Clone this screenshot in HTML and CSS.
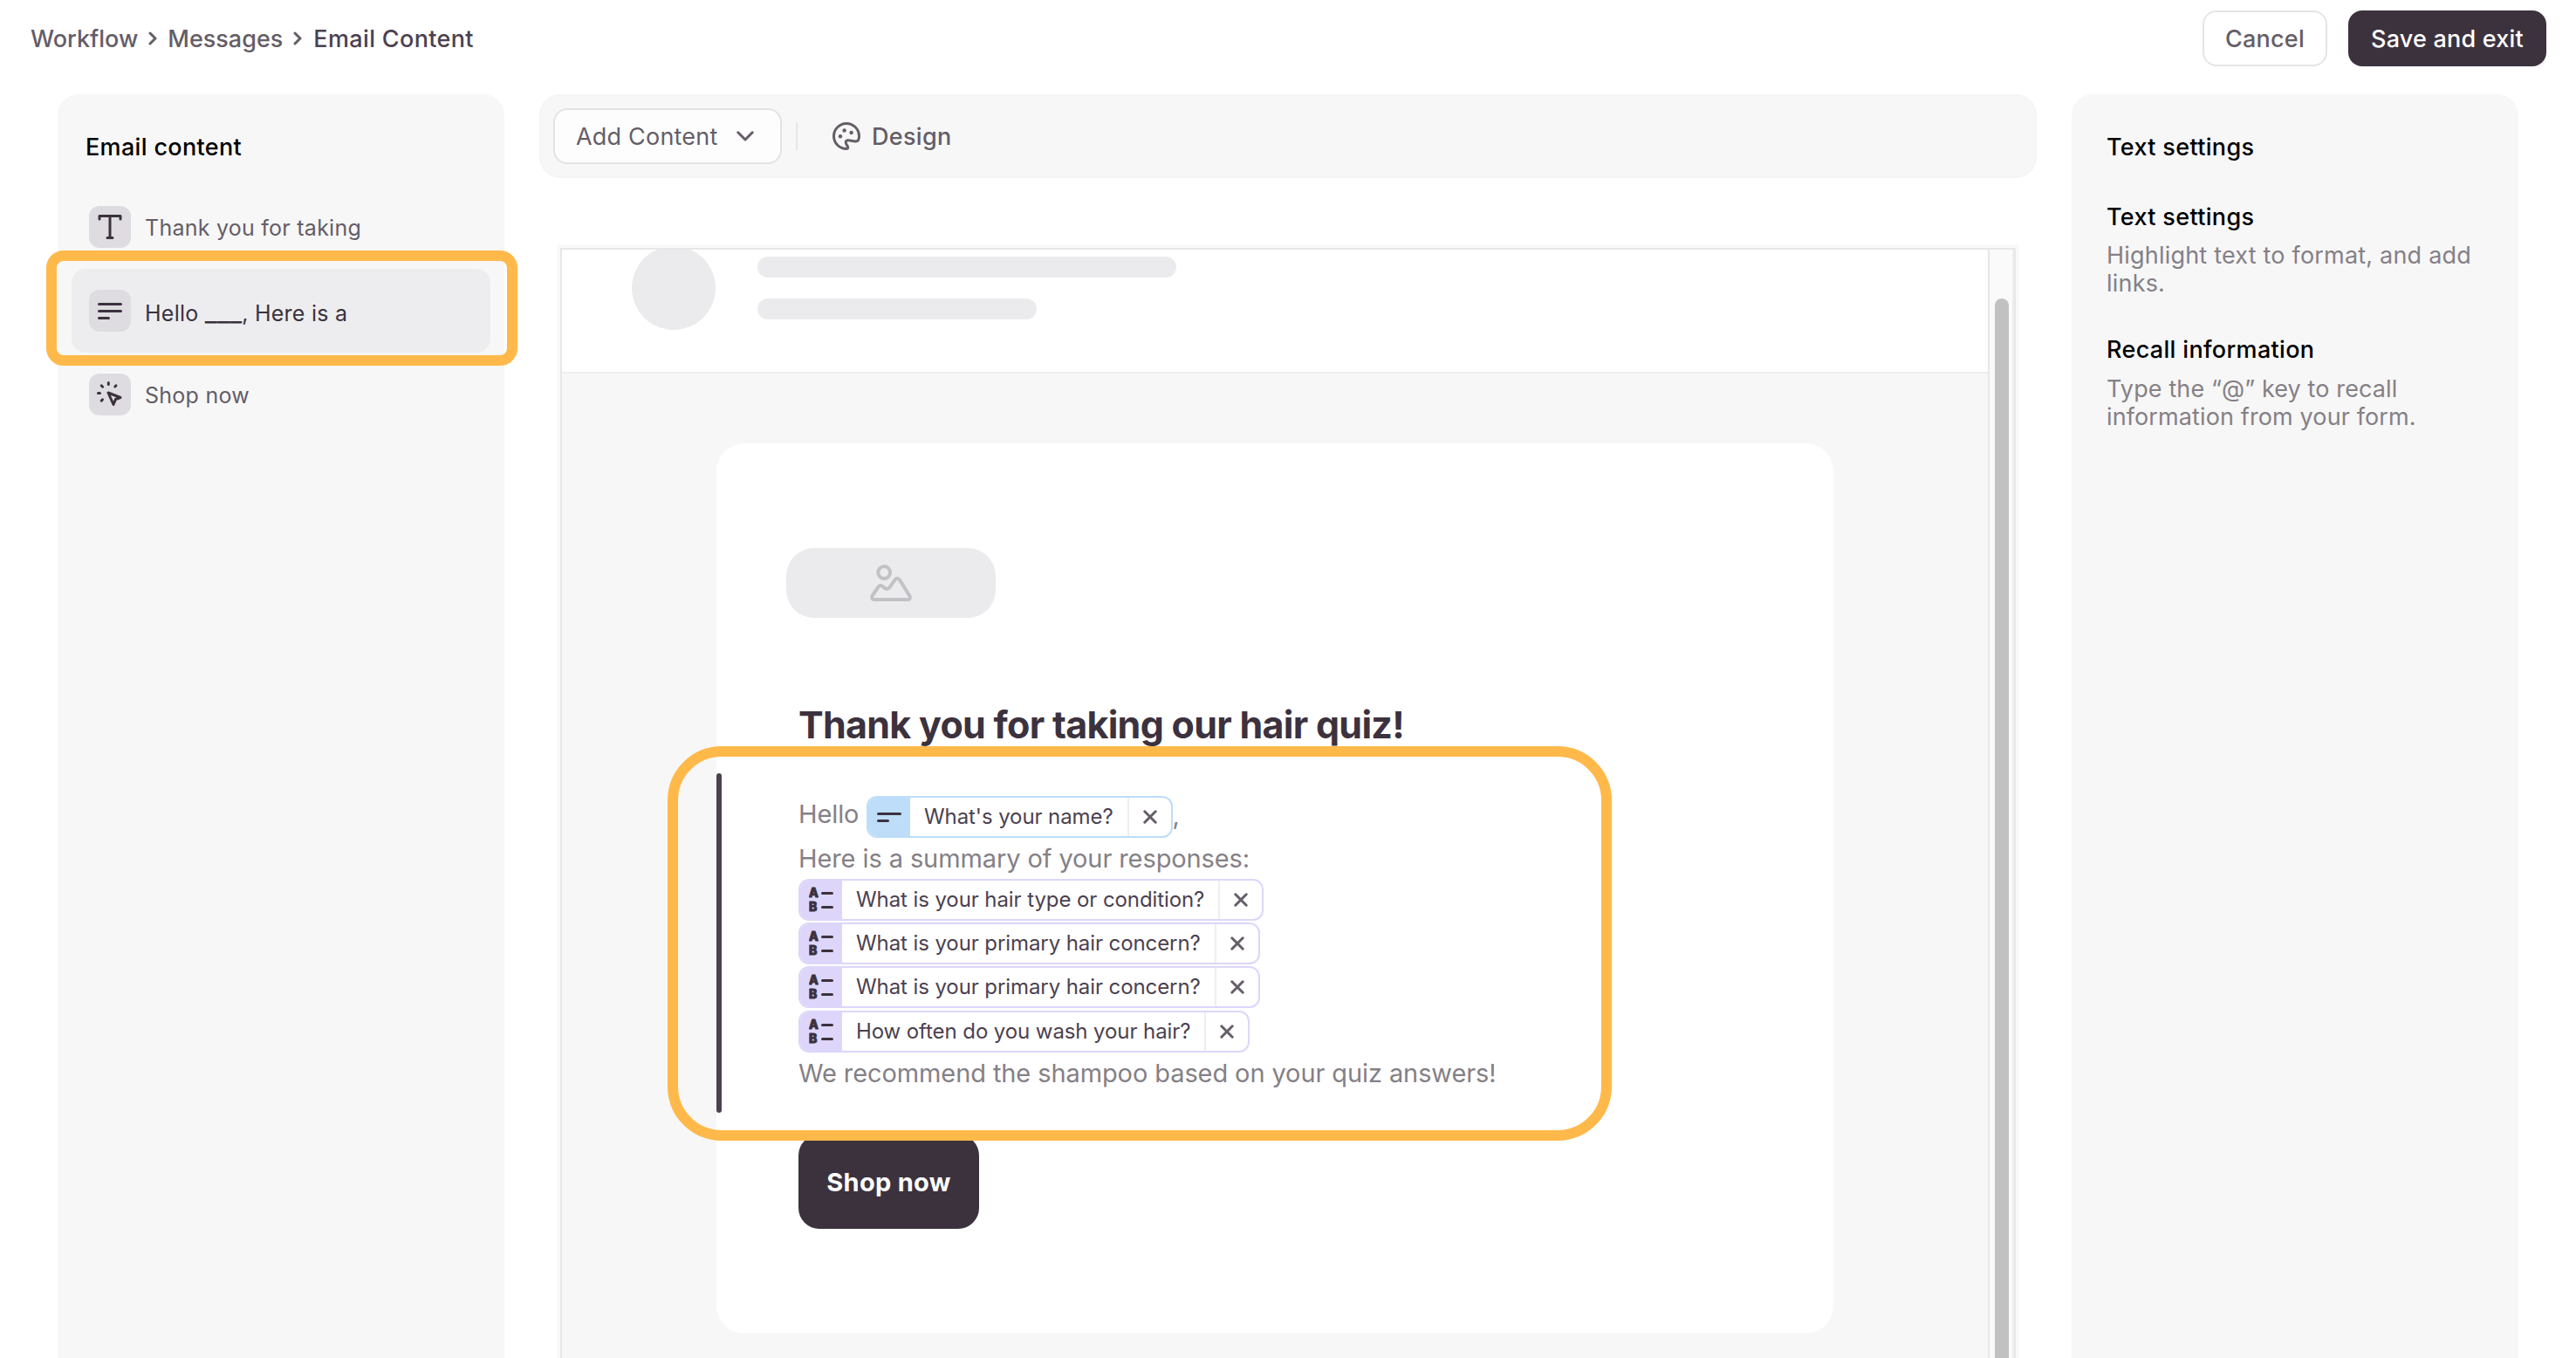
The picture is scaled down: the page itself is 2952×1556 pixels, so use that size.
FILE: index.html
```html
<!DOCTYPE html>
<html lang="en">
<head>
    <meta charset="UTF-8">
    <meta name="viewport" content="width=device-width, initial-scale=1.0">
    <title>Email Content</title>
    <link rel="stylesheet" href="styles.css">
</head>
<body>
<svg class="sprite" aria-hidden="true">
    <symbol id="icon-close" viewBox="0 0 16 16">
        <path d="M1.8 1.8 14.2 14.2M14.2 1.8 1.8 14.2"/>
    </symbol>
    <symbol id="icon-choice" viewBox="0 0 30 30">
        <text x="0" y="12.2">A</text>
        <text x="0" y="28.2">B</text>
        <path d="M15.5 7.5H26.5M15.5 23.5H26.5"/>
    </symbol>
</svg>

<header class="topbar">
    <nav class="breadcrumbs">
        <a class="crumb">Workflow</a>
        <svg class="crumb-arrow" viewBox="0 0 10 16"><path d="M2 2 8 8 2 14"/></svg>
        <a class="crumb">Messages</a>
        <svg class="crumb-arrow" viewBox="0 0 10 16"><path d="M2 2 8 8 2 14"/></svg>
        <span class="crumb current">Email Content</span>
    </nav>
    <div class="actions">
        <button class="btn btn-cancel">Cancel</button>
        <button class="btn btn-save">Save and exit</button>
    </div>
</header>

<main class="editor">
    <aside class="panel outline">
        <h2>Email content</h2>
        <ul>
            <li>
                <span class="item-icon">
                    <svg viewBox="0 0 48 48"><path d="M12 15V11.5H36V15M24 11.5V36.5M21 36.5H27"/></svg>
                </span>
                <span class="item-title">Thank you for taking</span>
            </li>
            <li class="selected">
                <span class="item-icon">
                    <svg viewBox="0 0 48 48"><path d="M11.5 16.5H36.5M11.5 24.5H36.5M11.5 32.5H22.5"/></svg>
                </span>
                <span class="item-title">Hello <span class="blank">___</span>, Here is a</span>
                <span class="highlight"></span>
            </li>
            <li>
                <span class="item-icon">
                    <svg viewBox="0 0 48 48"><path d="M22 22 36 27.5 30.5 29.5 28 35.5ZM22.3 10.5V12.5M14.2 13.8 15.6 15.2M31 13.8 29.8 15M10.5 22.5H12.5M15.5 29.8 14.2 31.2"/></svg>
                </span>
                <span class="item-title">Shop now</span>
            </li>
        </ul>
    </aside>

    <section class="workspace">
        <div class="toolbar">
            <button class="btn btn-add">
                <span>Add Content</span>
                <svg viewBox="0 0 20 12"><path d="M1.8 1.8 10 10 18.2 1.8"/></svg>
            </button>
            <span class="divider"></span>
            <button class="btn-design">
                <svg viewBox="0 0 32 32">
                    <path d="M16 1.5C8 1.5 1.5 8 1.5 16S8 30.5 16 30.5C18 30.5 18 29.3 17.4 28 16.5 26 15.2 24.8 15.2 23 15.2 21 16.8 20.6 18.6 20.8 21 21 23.5 22 26.5 22 29.5 22 30.5 19.5 30.5 16 30.5 8 24 1.5 16 1.5Z"/>
                    <circle cx="9" cy="16.3" r="2.2"/>
                    <circle cx="13.6" cy="9.5" r="2.2"/>
                    <circle cx="21.6" cy="12" r="2.2"/>
                </svg>
                <span>Design</span>
            </button>
        </div>

        <div class="preview">
            <div class="page">
                <div class="sender">
                    <span class="avatar"></span>
                    <div class="lines">
                        <span class="line"></span>
                        <span class="line short"></span>
                    </div>
                </div>
                <div class="card">
                    <div class="logo-placeholder">
                        <svg viewBox="0 0 48 42">
                            <circle cx="16.2" cy="9" r="6.9"/>
                            <path d="M4 40H44Q46.7 39.2 45.4 35.8L34 17.5Q31.3 14 28.6 17.3L22.5 26Q19.5 29.5 16.5 26.5 12 22 9.5 25.5L3 35Q1 38.5 4 40Z"/>
                        </svg>
                    </div>
                    <h1>Thank you for taking our hair quiz!</h1>
                    <div class="message">
                        <div class="row row-hello">
                            <span class="hello">Hello</span>
                            <span class="tag tag-text">
                                <span class="tag-icon"><svg viewBox="0 0 30 30"><path d="M1.5 11.4H26.5M1.5 19.4H12.5"/></svg></span>
                                <span class="tag-label">What's your name?</span>
                                <span class="tag-close"><svg><use href="#icon-close"/></svg></span>
                            </span>
                            <span class="comma">,</span>
                        </div>
                        <div class="row row-summary"><span>Here is a summary of your responses:</span></div>
                        <div class="row">
                            <span class="tag">
                                <span class="tag-icon"><svg><use href="#icon-choice"/></svg></span>
                                <span class="tag-label">What is your hair type or condition?</span>
                                <span class="tag-close"><svg><use href="#icon-close"/></svg></span>
                            </span>
                        </div>
                        <div class="row">
                            <span class="tag">
                                <span class="tag-icon"><svg><use href="#icon-choice"/></svg></span>
                                <span class="tag-label">What is your primary hair concern?</span>
                                <span class="tag-close"><svg><use href="#icon-close"/></svg></span>
                            </span>
                        </div>
                        <div class="row">
                            <span class="tag">
                                <span class="tag-icon"><svg><use href="#icon-choice"/></svg></span>
                                <span class="tag-label">What is your primary hair concern?</span>
                                <span class="tag-close"><svg><use href="#icon-close"/></svg></span>
                            </span>
                        </div>
                        <div class="row">
                            <span class="tag">
                                <span class="tag-icon"><svg><use href="#icon-choice"/></svg></span>
                                <span class="tag-label">How often do you wash your hair?</span>
                                <span class="tag-close"><svg><use href="#icon-close"/></svg></span>
                            </span>
                        </div>
                        <div class="row row-recommend"><span>We recommend the shampoo based on your quiz answers!</span></div>
                        <span class="highlight"></span>
                    </div>
                    <button class="btn-shop">Shop now</button>
                </div>
            </div>
            <div class="scrollbar"><div class="thumb"></div></div>
        </div>
    </section>

    <aside class="panel settings">
        <h2>Text settings</h2>
        <h3>Text settings</h3>
        <p>Highlight text to format, and add<br>links.</p>
        <h3>Recall information</h3>
        <p>Type the “@” key to recall<br>information from your form.</p>
    </aside>
</main>
</body>
</html>
```

FILE: styles.css
```css
:root {
    --ink: #3c323e;
    --ink-soft: #655d67;
    --muted: #858086;
    --panel: #f7f7f7;
    --placeholder: #ebebed;
    --highlight: #ffb94a;
}

* {
    box-sizing: border-box;
}

body {
    margin: 0;
    height: 1556px;
    overflow: hidden;
    background: #fff;
    color: var(--ink);
    font-family: Inter, "Liberation Sans", sans-serif;
    font-size: 27px;
    line-height: 32px;
}

h1, h2, h3, p, ul {
    margin: 0;
    padding: 0;
}

button {
    font: inherit;
    letter-spacing: inherit;
    border: none;
    background: none;
    padding: 0;
    white-space: nowrap;
}

svg {
    display: block;
    fill: none;
    stroke: currentColor;
    stroke-width: 3;
    stroke-linecap: round;
    stroke-linejoin: round;
}

.sprite {
    display: none;
}

/* Top bar */
.topbar {
    display: flex;
    justify-content: space-between;
    align-items: center;
    height: 88px;
    padding: 0 34px 0 35px;
    font-weight: 500;
}

.breadcrumbs {
    display: flex;
    align-items: center;
    gap: 12px;
    color: var(--ink-soft);
}

.crumb {
    padding-top: 1px;
}

.breadcrumbs .current {
    padding-left: 1px;
    color: #4c414f;
    letter-spacing: 0.35px;
}

.crumb-arrow {
    width: 10px;
    height: 16px;
}

.actions {
    display: flex;
    gap: 24px;
}

.btn {
    height: 64px;
    padding-top: 1px;
    border-radius: 16px;
    letter-spacing: 0.2px;
}

.btn-cancel {
    width: 143px;
    border: 2px solid #e5e5e5;
    color: var(--ink-soft);
}

.btn-save {
    width: 227px;
    background: var(--ink);
    color: #fff;
}

/* Three column editor */
.editor {
    display: grid;
    grid-template-columns: 512px 1716px 512px;
    gap: 40px;
    height: 1468px;
    padding: 20px 66px 0;
}

.panel {
    background: var(--panel);
    border-radius: 24px 24px 0 0;
}

.panel h2,
.panel h3 {
    color: #000;
    font-size: 27px;
    font-weight: 500;
    letter-spacing: 0.33px;
    line-height: 32px;
}

.outline {
    padding: 45px 16px 0;
}

.outline h2 {
    padding-left: 16px;
}

.outline ul {
    list-style: none;
    margin-top: 27px;
}

.outline li {
    position: relative;
    display: flex;
    align-items: center;
    gap: 16px;
    height: 96px;
    padding-left: 20px;
    border-radius: 16px;
    color: var(--ink-soft);
    font-size: 25px;
    letter-spacing: 0.25px;
}

.outline li.selected {
    background: #ededef;
    color: var(--ink);
}

.item-icon {
    width: 48px;
    height: 48px;
    border-radius: 12px;
    background: #dedce0;
    color: var(--ink);
}

.item-title {
    height: 32px;
    margin-top: 1px;
}

/* Merge field placeholder in a title */
.blank {
    font-size: 31px;
    letter-spacing: 0;
    line-height: 1;
}

.highlight {
    position: absolute;
    border: 12px solid var(--highlight);
    pointer-events: none;
}

.outline .highlight {
    inset: -21px -31px -15px -29px;
    border-radius: 20px;
}

.settings {
    padding: 45px 41px 0 40px;
}

.settings h2 {
    margin-bottom: 48px;
}

.settings p {
    margin: 12px 0 44px;
    color: var(--muted);
    letter-spacing: 0.2px;
    white-space: nowrap;
}

.settings p:last-child {
    margin-top: 13px;
    letter-spacing: 0.12px;
}

/* Toolbar */
.toolbar {
    display: flex;
    align-items: center;
    height: 96px;
    padding-left: 14px;
    border: 2px solid #f5f5f5;
    border-radius: 24px;
    background: var(--panel);
    color: var(--ink-soft);
}

.btn-add {
    display: flex;
    align-items: center;
    justify-content: space-between;
    width: 262px;
    padding: 0 30px 0 24px;
    border: 2px solid #e3e3e3;
    background: #fdfdfd;
    color: inherit;
}

.btn-add span,
.btn-design span {
    padding-top: 1px;
}

.btn-add svg {
    width: 20px;
    height: 12px;
}

.divider {
    width: 2px;
    height: 32px;
    margin: 0 40px 0 16px;
    background: #e7e7e7;
}

.btn-design {
    display: flex;
    align-items: center;
    gap: 13px;
    color: inherit;
    font-weight: 500;
    letter-spacing: 0.3px;
}

.btn-design svg {
    width: 32px;
    height: 32px;
}

.btn-design circle {
    fill: currentColor;
    stroke: none;
}

/* Email preview */
.preview {
    display: flex;
    width: 1668px;
    height: 1272px;
    margin: 80px 0 0 24px;
    border: 2px solid #e7e7e7;
    border-bottom: none;
    box-shadow: 0 0 0 4px #f9f9f9;
}

.page {
    flex: 1;
    height: 1270px;
    background: var(--panel);
}

.sender {
    display: flex;
    gap: 48px;
    height: 142px;
    padding-left: 80px;
    overflow: hidden;
    border-bottom: 2px solid #eee;
    background: #fff;
}

.avatar {
    width: 96px;
    height: 96px;
    margin-top: -4px;
    border-radius: 50%;
    background: var(--placeholder);
}

.lines {
    display: flex;
    flex-direction: column;
    gap: 24px;
    padding-top: 8px;
}

.line {
    width: 480px;
    height: 24px;
    border-radius: 12px;
    background: var(--placeholder);
}

.line.short {
    width: 320px;
}

.card {
    width: 1280px;
    height: 1020px;
    margin: 80px 0 0 177px;
    padding-top: 120px;
    border-radius: 32px;
    background: #fff;
}

.logo-placeholder {
    display: flex;
    align-items: center;
    justify-content: center;
    width: 240px;
    height: 80px;
    margin-left: 80px;
    border-radius: 32px;
    background: var(--placeholder);
    color: #c2c1c6;
}

.logo-placeholder svg {
    width: 48px;
    height: 42px;
    stroke-width: 4;
}

.card h1 {
    margin: 92px 0 0 94px;
    font-size: 43px;
    font-weight: 700;
    letter-spacing: -0.72px;
    line-height: 60px;
    white-space: nowrap;
}

/* Selected text block */
.message {
    position: relative;
    height: 389px;
    margin-top: 26px;
    padding: 24.7px 0 0 94px;
    color: var(--muted);
    font-size: 29px;
    letter-spacing: -0.1px;
    white-space: nowrap;
}

.message::before {
    content: "";
    position: absolute;
    left: 0;
    top: 0;
    bottom: 0;
    width: 6px;
    border-radius: 3px;
    background: #4c414f;
}

.message .highlight {
    inset: -31px 254px -32px -56px;
    border-radius: 62px;
}

.row {
    display: flex;
    align-items: center;
    height: 50.2px;
}

.hello {
    width: 78px;
    margin-top: -5px;
}

.comma {
    margin-top: -2px;
}

.row-summary {
    height: 45px;
}

.row-summary span {
    padding-top: 1px;
}

.row-recommend {
    height: 46px;
}

.tag {
    display: flex;
    height: 48px;
    overflow: hidden;
    border: 2px solid #ddd6fa;
    border-radius: 12px;
    background: #fff;
    color: #4c414f;
    font-size: 24px;
    letter-spacing: -0.09px;
}

.tag-icon {
    display: flex;
    align-items: center;
    width: 48px;
    padding-left: 10px;
    background: #ddd6fa;
    color: var(--ink);
}

.tag-icon svg {
    width: 30px;
    height: 30px;
}

#icon-choice text {
    fill: currentColor;
    stroke: currentColor;
    stroke-width: 1;
    font: 800 14px Inter, sans-serif;
}

.tag-text {
    border-color: #bdddf9;
}

.tag-text .tag-icon {
    background: #bdddf9;
}

.tag-label {
    padding: 6px 16px;
}

.tag-close {
    display: flex;
    align-items: center;
    width: 50px;
    padding-left: 16px;
    border-left: 2px solid #eee;
    color: var(--ink-soft);
}

.tag-close svg {
    width: 16px;
    height: 16px;
}

.btn-shop {
    width: 207px;
    height: 108px;
    margin: 25px 0 0 94px;
    padding-top: 1px;
    border-radius: 24px;
    background: var(--ink);
    color: #fff;
    font-size: 29px;
    font-weight: 700;
    letter-spacing: 0.3px;
}

.scrollbar {
    width: 30px;
    height: 1270px;
    padding: 56px 0 0 6px;
    border-left: 2px solid #e7e7e7;
    border-right: 2px solid #eee;
    background: #fafafa;
}

.thumb {
    width: 16px;
    height: 1214px;
    border-radius: 8px 8px 0 0;
    background: #c1c1c1;
}
```
